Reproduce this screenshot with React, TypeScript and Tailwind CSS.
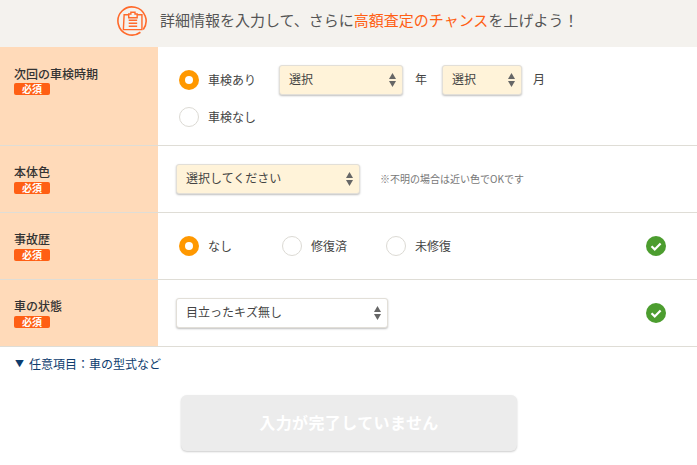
const font = { fontFamily: '"Noto Sans CJK JP", "Noto Sans", sans-serif' };

function Badge() {
  return (
    <span className="flex h-3 w-9 items-center justify-center rounded-[2px] bg-[#ff5f14] text-[10px] leading-3 font-bold text-[#fff]">
      必須
    </span>
  );
}

function Label({ children, first }: { children: string; first?: boolean }) {
  return (
    <div className={`w-[158px] shrink-0 self-stretch bg-[#ffdab9] pl-[14px] ${first ? "pt-[17px]" : "pt-[16px]"}`}>
      <div className={`text-[12px] leading-[19px] font-medium text-[#333] ${first ? "" : "mb-[1px]"}`}>{children}</div>
      <Badge />
    </div>
  );
}

function Radio({ on, label, w }: { on?: boolean; label: string; w?: string }) {
  return (
    <div className={`flex items-center ${w ?? ""}`}>
      {on ? (
        <span className="flex h-5 w-5 items-center justify-center rounded-full bg-[#ff9800]">
          <span className="h-2 w-2 rounded-full bg-white" />
        </span>
      ) : (
        <span className="h-5 w-5 rounded-full border border-[#dcdad4] bg-white" />
      )}
      <span className="ml-[9px] text-[12px] leading-5 text-[#444]">{label}</span>
    </div>
  );
}

function Select({ text, w, white }: { text: string; w: string; white?: boolean }) {
  return (
    <div
      className={`flex h-[30px] items-center justify-between rounded-[3px] border border-[#e2dfd8] pl-[9px] pr-[5px] text-[12px] text-[#444] shadow-[0_1px_2px_rgba(0,0,0,0.25)] ${w} ${white ? "bg-white" : "bg-[#fff3d9]"}`}
    >
      <span className="pb-[2px]">{text}</span>
      <svg width="9" height="16" viewBox="0 0 9 16">
        <path d="M4.5 1 8 7H1z" fill="#666" />
        <path d="M4.5 15 8 9H1z" fill="#666" />
      </svg>
    </div>
  );
}

function Check() {
  return (
    <svg width="20" height="20" viewBox="0 0 20 20" className="shrink-0">
      <circle cx="10" cy="10" r="10" fill="#4c9d2f" />
      <path d="M5.5 10.3 8.7 13.4 14.6 7.4" fill="none" stroke="#fff" strokeWidth="2.2" />
    </svg>
  );
}

function Clipboard() {
  return (
    <svg width="30" height="30" viewBox="0 0 32 32" fill="none" stroke="#ff6a2b" strokeWidth="1.5">
      <path d="M28 25A15 15 0 1 0 25 28" strokeWidth="1.7" />
      <path d="M12.5 9.3H7.6L6.8 25.2H26.6V9.3H21.5" />
      <path d="M12.5 12.6V8.6H14.8V6.6H19.2V8.6H21.5V12.6Z" />
      <path d="M12.5 15.2H21.5M12.5 18.4H21.5M12.5 21.6H21.5" />
    </svg>
  );
}

export default function App() {
  return (
    <div className="h-[465px] w-[697px] overflow-hidden bg-white" style={font}>
      <div className="flex h-[47px] items-center bg-[#f4f2ee] pb-[6px] pl-[117px]">
        <Clipboard />
        <p className="ml-[13px] text-[15px] text-[#555]">
          詳細情報を入力して、さらに<span className="text-[#ff5f14]">高額査定のチャンス</span>を上げよう！
        </p>
      </div>

      <div className="flex h-[99px] border-b border-[#dfddd6]">
        <Label first>次回の車検時期</Label>
        <div className="pl-[21px] pt-[18px]">
          <div className="flex items-center">
            <Radio on label="車検あり" w="w-[100px]" />
            <Select text="選択" w="w-[124px]" />
            <span className="ml-3 pb-[2px] text-[12px] text-[#444]">年</span>
            <div className="ml-[15px]">
              <Select text="選択" w="w-[80px]" />
            </div>
            <span className="ml-[11px] pb-[2px] text-[12px] text-[#444]">月</span>
          </div>
          <div className="mt-[12px]">
            <Radio label="車検なし" />
          </div>
        </div>
      </div>

      <div className="flex h-[67px] border-b border-[#dfddd6]">
        <Label>本体色</Label>
        <div className="flex items-center pb-[1px] pl-[18px]">
          <Select text="選択してください" w="w-[184px]" />
          <span className="ml-5 text-[10px] text-[#777]">※不明の場合は近い色でOKです</span>
        </div>
      </div>

      <div className="flex h-[67px] border-b border-[#dfddd6]">
        <Label>事故歴</Label>
        <div className="flex flex-1 items-center pb-[1px] pl-[21px] pr-[31px]">
          <Radio on label="なし" w="w-[103px]" />
          <Radio label="修復済" w="w-[104px]" />
          <Radio label="未修復" />
          <div className="ml-auto">
            <Check />
          </div>
        </div>
      </div>

      <div className="flex h-[67px] border-b border-[#dfddd6]">
        <Label>車の状態</Label>
        <div className="flex flex-1 items-center pb-[1px] pl-[18px] pr-[31px]">
          <Select text="目立ったキズ無し" w="w-[212px]" white />
          <div className="ml-auto">
            <Check />
          </div>
        </div>
      </div>

      <div className="flex items-center pl-[15px] pt-[8px] text-[12px] leading-[18px] text-[#0d3c6e]">
        <span className="text-[9px]">▼</span>
        <span className="ml-[5px]">任意項目：車の型式など</span>
      </div>

      <div className="flex justify-center pt-[22px]">
        <div className="ml-[1px] flex h-[56px] w-[336px] items-center justify-center rounded-[6px] bg-[#ececec] pb-[3px] text-[16px] font-bold tracking-[0.4px] text-white shadow-[0_1px_2px_rgba(0,0,0,0.2)]">
          入力が完了していません
        </div>
      </div>
    </div>
  );
}
